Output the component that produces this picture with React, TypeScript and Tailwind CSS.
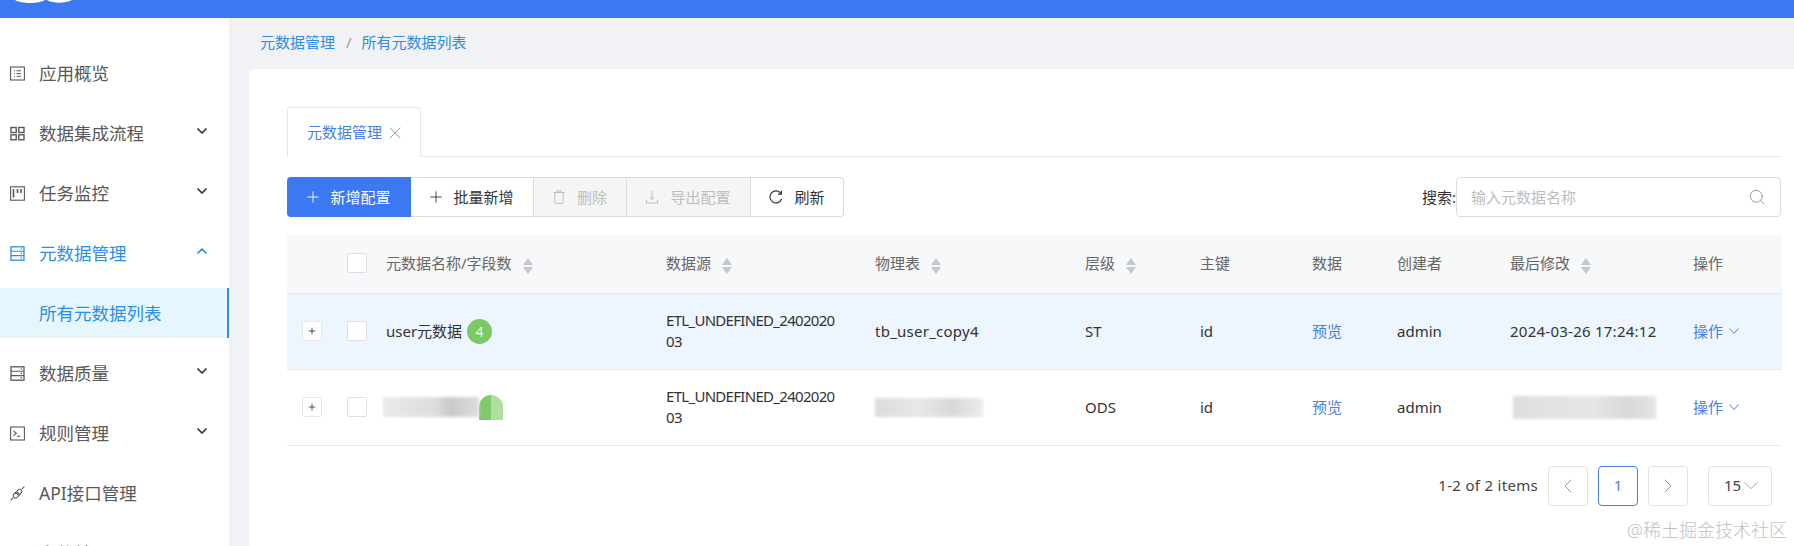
import React from 'react';
import { ChevronDown, ChevronLeft, ChevronRight, ChevronUp, Plus, Search, X } from 'lucide-react';

function Box({ children, className = 'w-[15px] h-[15px]' }: { children: React.ReactNode; className?: string }) {
  return (
    <svg viewBox="0 0 15 15" fill="none" stroke="currentColor" strokeWidth="1.1" className={`${className} shrink-0`}>
      {children}
    </svg>
  );
}

const OverviewIcon = () => (
  <Box>
    <rect x="0.6" y="1" width="13.8" height="13" />
    <path d="M4 4.7h1M4 7.5h1M4 10.3h1M6.5 4.7h4.5M6.5 7.5h4.5M6.5 10.3h4.5" />
  </Box>
);
const GridIcon = () => (
  <Box>
    <rect x="1" y="1.5" width="5.2" height="5" strokeWidth="1.4" />
    <rect x="8.8" y="1.5" width="5.2" height="5" strokeWidth="1.4" />
    <rect x="1" y="8.8" width="5.2" height="5" strokeWidth="1.4" />
    <rect x="8.8" y="8.8" width="5.2" height="5" strokeWidth="1.4" />
  </Box>
);
const BoardIcon = () => (
  <Box>
    <rect x="0.6" y="0.8" width="13.8" height="13.4" />
    <path d="M3.5 3v8.5" strokeWidth="1.6" />
    <path d="M7.5 3v4M11 3v4" strokeWidth="1.6" />
  </Box>
);
const DbIcon = () => (
  <Box>
    <rect x="1" y="0.8" width="13" height="13.4" strokeWidth="1.3" />
    <path d="M1 5.2h13M1 9.6h13" strokeWidth="1.1" />
    <path d="M10.5 3h1.500M10.5 7.4h1.500M10.5 11.9h1.500" strokeWidth="1.2" />
  </Box>
);
const TerminalIcon = () => (
  <Box>
    <rect x="0.6" y="1" width="13.8" height="13" />
    <path d="M3.5 4.8 6.3 7.3 3.5 9.8M7 10.3h3.5" />
  </Box>
);
const ApiIcon = () => (
  <Box>
    <path d="M.6 14.4 3.2 11.8M14.4.6 11.8 3.2" />
    <path d="M5.600 6.400 3.600 8.400a2.300 2.300 0 0 0 3.200 3.200l2-2Z" />
    <path d="M6.600 5.400 9.600 8.600 11.200 7a2.200 2.200 0 0 0-3-3.200Z" />
  </Box>
);

const menu = [
  { label: '应用概览', icon: <OverviewIcon /> },
  { label: '数据集成流程', icon: <GridIcon />, arrow: true },
  { label: '任务监控', icon: <BoardIcon />, arrow: true },
  { label: '元数据管理', icon: <DbIcon />, open: true },
  { label: '数据质量', icon: <DbIcon />, arrow: true },
  { label: '规则管理', icon: <TerminalIcon />, arrow: true },
  { label: 'API接口管理', icon: <ApiIcon /> },
  { label: '文件转', icon: <DbIcon /> },
];

function Sidebar() {
  return (
    <aside className="w-[229px] shrink-0 bg-white pt-[25px] text-[17.5px] text-[#595959]">
      {menu.map((item) => (
        <React.Fragment key={item.label}>
          <div className={`flex h-[60px] items-center pl-[10px] pr-[19px] ${item.open ? 'text-[#2b8fe8]' : ''}`}>
            {item.icon}
            <span className="ml-[14px] flex-1">{item.label}</span>
            {item.arrow && <ChevronDown size={16} strokeWidth={2.6} className="-mt-1 text-[#333]" />}
            {item.open && <ChevronUp size={16} strokeWidth={2.6} className="-mt-1 text-[#2b8fe8]" />}
          </div>
          {item.open && (
            <div className="mb-[5px] mt-[5px] flex h-[50px] items-center border-r-2 border-[#2b8fe8] bg-[#e6f6ff] pl-[39px] text-[#2b8fe8]">
              所有元数据列表
            </div>
          )}
        </React.Fragment>
      ))}
    </aside>
  );
}

function SortIcon() {
  return (
    <svg viewBox="0 0 10 16" className="ml-[11px] mt-[6px] h-4 w-[10px] shrink-0 fill-[#c4c7cc]">
      <path d="M5 0 10 7H0Z" />
      <path d="M5 16 0 9H10Z" />
    </svg>
  );
}

function Checkbox() {
  return <span className="block h-5 w-5 rounded-[2px] border border-[#dcdfe6] bg-white" />;
}

function ToolButton({ icon, label, tone }: { icon: React.ReactNode; label: string; tone: string }) {
  return <button className={`flex h-full items-center justify-center ${tone}`}>{icon}{label}</button>;
}

const TrashIcon = () => (
  <svg viewBox="0 0 12 14" fill="none" stroke="currentColor" className="h-[14px] w-3">
    <path d="M.5 2.500h11M4 2.500V.8h4v1.700M1.800 2.500v10.800h8.400V2.500" />
  </svg>
);
const ExportIcon = () => (
  <svg viewBox="0 0 12 14" fill="none" stroke="currentColor" className="h-[14px] w-3">
    <path d="M6 1v8.500M3.500 7 6 9.500 8.500 7M.5 9.500v3.500h11V9.500" />
  </svg>
);
const RefreshIcon = () => (
  <svg viewBox="0 0 14 14" fill="none" stroke="currentColor" strokeWidth="1.2" className="h-[14px] w-[14px]">
    <path d="M12 3.600A6 6 0 1 0 12.600 9" />
    <path d="M12.400.8v3.400H9" />
  </svg>
);

const Blur = ({ className }: { className: string }) => <div className={`blur-[1.5px] ${className}`} />;

const headers = [
  { label: '元数据名称/字段数', sort: true },
  { label: '数据源', sort: true },
  { label: '物理表', sort: true },
  { label: '层级', sort: true },
  { label: '主键' },
  { label: '数据' },
  { label: '创建者' },
  { label: '最后修改', sort: true },
  { label: '操作' },
];

function Toggle() {
  return (
    <span className="ml-[15px] flex h-5 w-5 items-center justify-center rounded-[2px] border border-[#e8e8e8] bg-white">
      <Plus size={10} strokeWidth={2} className="text-[#333]" />
    </span>
  );
}

function Source() {
  return <div className="w-[172px] break-all leading-[21px] tracking-[-0.7px]">ETL_UNDEFINED_240202003</div>;
}

function Ops() {
  return (
    <span className="flex items-center gap-[6px] text-[#4a80e0]">
      操作
      <svg viewBox="0 0 10 6" fill="none" stroke="currentColor" className="h-[6px] w-[10px]">
        <path d="M.5.5 5 5.500 9.500.5" />
      </svg>
    </span>
  );
}

function DataTable() {
  return (
    <table className="mt-[18px] w-[1495px] table-fixed border-collapse text-[15px] text-[#333]">
      <colgroup>
        <col className="w-[60px]" />
        <col className="w-[39px]" />
        <col className="w-[280px]" />
        <col className="w-[209px]" />
        <col className="w-[210px]" />
        <col className="w-[115px]" />
        <col className="w-[112px]" />
        <col className="w-[85px]" />
        <col className="w-[113px]" />
        <col className="w-[183px]" />
        <col className="w-[89px]" />
      </colgroup>
      <thead>
        <tr className="h-[58px] border-b border-[#e6e8ec] bg-[#f7f8fa] text-[#666]">
          <th />
          <th className="pb-[1px]"><Checkbox /></th>
          {headers.map((h) => (
            <th key={h.label} className="pb-[1px] text-left font-normal">
              <div className="flex items-center">
                {h.label}
                {h.sort && <SortIcon />}
              </div>
            </th>
          ))}
        </tr>
      </thead>
      <tbody>
        <tr className="h-[76px] border-b border-[#e6e8ec] bg-[#edf5fe]">
          <td><Toggle /></td>
          <td><Checkbox /></td>
          <td>
            <div className="flex items-center gap-[5px]">
              user元数据
              <span className="flex h-[25px] w-[25px] items-center justify-center rounded-full bg-[#7cc864] text-[14px] text-[#e8f6e2]">4</span>
            </div>
          </td>
          <td><Source /></td>
          <td className="tracking-[0.25px]">tb_user_copy4</td>
          <td>ST</td>
          <td>id</td>
          <td className="text-[#4a80e0]">预览</td>
          <td>admin</td>
          <td className="tracking-[0.25px]">2024-03-26 17:24:12</td>
          <td><Ops /></td>
        </tr>
        <tr className="h-[76px] border-b border-[#e6e8ec]">
          <td><Toggle /></td>
          <td><Checkbox /></td>
          <td>
            <div className="-ml-[3px] flex h-[25px] items-center">
              <Blur className="h-[20px] w-[96px] bg-[linear-gradient(90deg,#eaeaea,#dddddd_55%,#c9c9c9_70%,#dedede)]" />
              <div className="h-[25px] w-[12px] rounded-tl-[12px] bg-[#82c96c]" />
              <div className="h-[25px] w-[12px] rounded-tr-[12px] bg-[#afdf9f]" />
            </div>
          </td>
          <td><Source /></td>
          <td><Blur className="h-[19px] w-[108px] bg-[linear-gradient(90deg,#dcdcdc,#e8e8e8_40%,#d8d8d8_72%,#ececec)]" /></td>
          <td>ODS</td>
          <td>id</td>
          <td className="text-[#4a80e0]">预览</td>
          <td>admin</td>
          <td><Blur className="ml-[3px] h-[23px] w-[143px] bg-[linear-gradient(90deg,#dedede,#e6e6e6_55%,#d8d8d8_80%,#e4e4e4)]" /></td>
          <td><Ops /></td>
        </tr>
      </tbody>
    </table>
  );
}

function Pager() {
  const page = 'flex h-10 w-10 items-center justify-center rounded border border-[#e2e2e2]';
  return (
    <div className="mr-[10px] mt-5 flex items-center justify-end text-[15px] text-[#444]">
      <span className="mr-[10px] tracking-[0.3px]">1-2 of 2 items</span>
      <span className={page}><ChevronLeft size={24} strokeWidth={1} className="text-[#999]" /></span>
      <span className="mx-[10px] flex h-10 w-10 items-center justify-center rounded border border-[#4a80e0] text-[#4a80e0]">1</span>
      <span className={page}><ChevronRight size={24} strokeWidth={1} className="text-[#999]" /></span>
      <span className="ml-5 flex h-10 w-16 items-center rounded border border-[#e2e2e2] pl-[15px]">
        15
        <svg viewBox="0 0 14 7" fill="none" stroke="#aaa" className="ml-[3px] h-[7px] w-[14px]">
          <path d="M.5.5 7 6.500 13.500.5" />
        </svg>
      </span>
    </div>
  );
}

export default function App() {
  return (
    <div className="relative flex h-[546px] w-[1794px] flex-col overflow-hidden bg-[#f0f2f5] font-['Noto_Sans','Noto_Sans_CJK_SC',sans-serif]">
      <header className="h-[18px] shrink-0 overflow-hidden bg-[#3b78f2] pl-[15px]">
        <svg viewBox="0 0 57 4" className="h-1 w-[57px] fill-white">
          <path d="M0 0C6 4 24 4 30 0ZM32 0C38 3.500 50 3.500 57 0Z" />
        </svg>
      </header>
      <div className="flex min-h-0 flex-1">
        <Sidebar />
        <main className="flex min-w-0 flex-1 flex-col">
          <nav className="flex h-[51px] shrink-0 items-center pb-[2px] pl-[31px] text-[15px] text-[#2b8fe8]">
            元数据管理
            <span className="ml-[11px] mr-[10px] text-[#999]">/</span>
            所有元数据列表
          </nav>
          <section className="ml-5 flex-1 rounded-tl-md bg-white pl-[38px] pt-[38px]">
            <div className="mr-3 h-[50px] border-b border-[#e8e8e8]">
              <div className="flex h-[50px] w-[134px] items-center rounded-t border border-b-0 border-[#e8e8e8] bg-white pl-[19px] text-[15px] text-[#4a80e0]">
                元数据管理
                <X size={20} strokeWidth={1} className="ml-[3px] text-[#888]" />
              </div>
            </div>
            <div className="mr-[13px] mt-5 flex h-10 items-center justify-between">
              <div className="flex h-10 text-[15px] [&>button:not(:first-child)]:border-y [&>button:not(:first-child)]:border-r [&>button]:border-[#dcdcdc]">
                <ToolButton icon={<Plus size={18} strokeWidth={1.2} className="-mx-[3px]" />} label="新增配置" tone="w-[124px] gap-[11px] rounded-l bg-[#3b78f2] text-white" />
                <ToolButton icon={<Plus size={18} strokeWidth={1.2} className="-mx-[3px]" />} label="批量新增" tone="w-[123px] gap-[11px] text-[#333]" />
                <ToolButton icon={<TrashIcon />} label="删除" tone="w-[93px] gap-3 bg-[#f5f5f5] text-[#bdbdbd]" />
                <ToolButton icon={<ExportIcon />} label="导出配置" tone="w-[124px] gap-3 bg-[#f5f5f5] text-[#bdbdbd]" />
                <ToolButton icon={<RefreshIcon />} label="刷新" tone="w-[93px] gap-[11px] rounded-r text-[#333]" />
              </div>
              <div className="flex items-center text-[15px] text-[#333]">
                <span className="w-[34px] whitespace-nowrap">搜索:</span>
                <div className="flex h-10 w-[325px] items-center rounded border border-[#dcdcdc] pl-[14px] pr-[14px]">
                  <input placeholder="输入元数据名称" className="min-w-0 flex-1 bg-transparent outline-none placeholder:text-[#bdbdbd]" />
                  <Search size={18} strokeWidth={1.1} className="text-[#888]" />
                </div>
              </div>
            </div>
            <DataTable />
            <div className="w-[1495px]"><Pager /></div>
          </section>
        </main>
      </div>
      <div className="absolute bottom-[5px] right-[7px] text-[18px] leading-[22px] font-light text-[#c2c2c2]">
        @稀土掘金技术社区
      </div>
    </div>
  );
}
